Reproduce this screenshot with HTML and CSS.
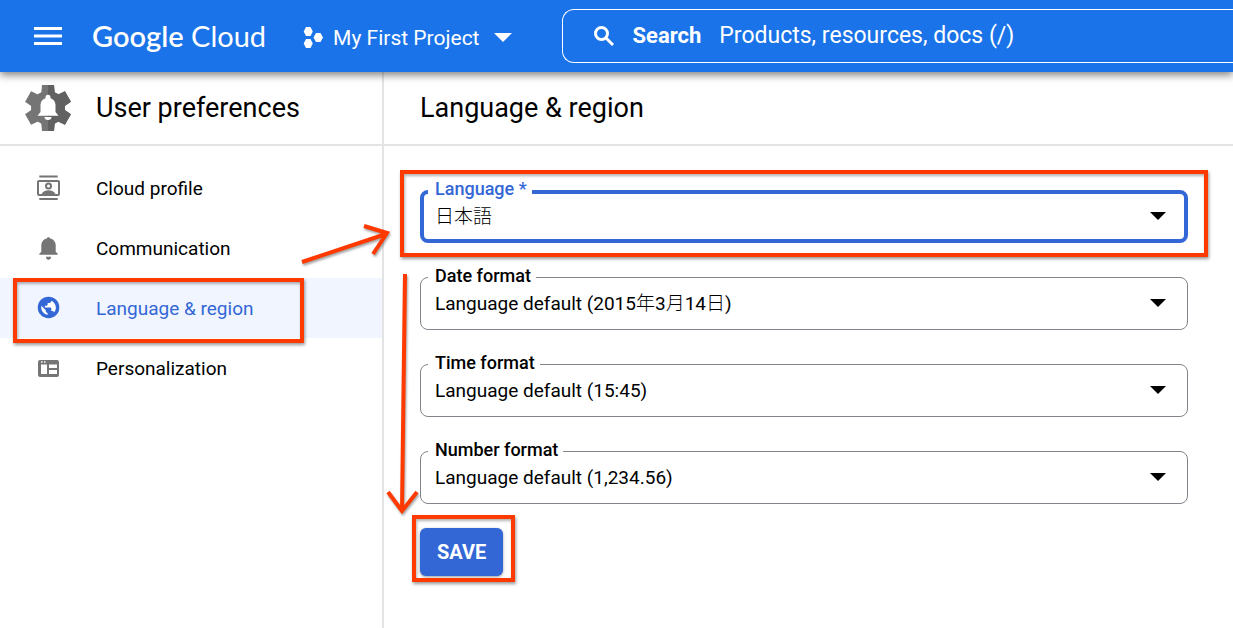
FILE: index.html
```
<!DOCTYPE html>
<html lang="en">
<head>
    <meta charset="UTF-8">
    <meta name="viewport" content="width=device-width, initial-scale=1.0">
    <title>Language &amp; region - User preferences</title>
    <link rel="stylesheet" href="styles.css">
</head>
<body>
    <header class="topbar">
        <button class="menu-btn" aria-label="Main menu">
            <svg width="28" height="20" viewBox="0 0 28 20" fill="#fff"><path d="M0 1h28v3H0zM0 8.500h28v3H0zM0 16h28v3H0z"/></svg>
        </button>
        <a class="logo" href="#"><b>Google</b> Cloud</a>
        <button class="project-btn">
            <svg width="21" height="22" viewBox="0 0 21 22" fill="#fff">
                <path d="M3 0h4.500l2.300 4.500L7.500 9H3L.7 4.500zM3 12h4.500l2.300 4.500L7.500 21H3L.7 16.500zM13 6h4.500l2.500 4.500-2.500 4.500H13l-2.500-4.500z"/>
            </svg>
            <span>My First Project</span>
            <svg class="project-caret" width="18" height="9" viewBox="0 0 18 9" fill="#fff"><path d="M0 0h18L9 9z"/></svg>
        </button>
        <div class="search">
            <svg width="22" height="22" viewBox="0 0 22 22" fill="none" stroke="#fff" stroke-width="3"><circle cx="8.500" cy="8.500" r="6"/><path d="M13 13l7 7"/></svg>
            <label for="search-input">Search</label>
            <input type="text" id="search-input" placeholder="Products, resources, docs (/)">
        </div>
    </header>
    <div class="page">
        <aside class="sidebar">
            <div class="section-head">
                <svg width="48" height="48" viewBox="-24 -24 48 48">
                    <defs>
                        <path id="tooth" d="M-6-23H6L7-12H-7z"/>
                        <g id="gear">
                            <circle r="17"/>
                            <use href="#tooth"/>
                            <use href="#tooth" transform="rotate(60)"/>
                            <use href="#tooth" transform="rotate(120)"/>
                            <use href="#tooth" transform="rotate(180)"/>
                            <use href="#tooth" transform="rotate(240)"/>
                            <use href="#tooth" transform="rotate(300)"/>
                        </g>
                        <clipPath id="right-half"><path d="M0-24h24v48H0z"/></clipPath>
                    </defs>
                    <use href="#gear" fill="#757575"/>
                    <g clip-path="url(#right-half)"><use href="#gear" fill="#616161"/></g>
                    <path fill="#fff" d="M-10.500 7.700L-7.500 4V-3a7.500 7.500 0 0 1 5-6.800v-1a2.500 2.500 0 0 1 5 0v1a7.500 7.500 0 0 1 5 6.800v7l3 3.700zM-3.500 9h7a3.500 3 0 0 1-7 0z"/>
                </svg>
                <h2>User preferences</h2>
            </div>
            <nav class="nav">
                <a href="#">
                    <svg width="28" height="28" viewBox="0 0 28 28" fill="#757575">
                        <path d="M5.300 1.500h18.400v2H5.300zM5.300 24h18.400v2H5.300z"/>
                        <rect x="4" y="7" width="21" height="14" rx="1" fill="none" stroke="#757575" stroke-width="2"/>
                        <circle cx="14.500" cy="12" r="2.500" fill="none" stroke="#757575" stroke-width="2"/>
                        <path d="M7.500 20.500c1-3 4-4.300 7-4.300s6 1.300 7 4.300z"/>
                    </svg>
                    Cloud profile
                </a>
                <a href="#">
                    <svg width="28" height="28" viewBox="0 0 28 28" fill="#757575">
                        <path d="M5.300 20.700v-1l2-2v-7a7.200 7.200 0 0 1 5.400-6.200 1.900 1.900 0 0 1 3.600 0 7.200 7.200 0 0 1 5.400 6.200v7l2 2v1zM12 22.700h5a2.500 3 0 0 1-5 0z"/>
                    </svg>
                    Communication
                </a>
                <a href="#" class="active">
                    <svg width="28" height="28" viewBox="-1 -1 26 26" fill="#3367d6">
                        <circle cx="12.500" cy="11.500" r="10"/>
                        <path fill="#fff" transform="translate(2.300 1.300) scale(.85)" d="M4.210 10.210L9 15v1c0 1.100.9 2 2 2v1.930c-3.950-.49-7-3.850-7-7.930 0-.62.08-1.210.21-1.790zM15 4.590c2.930 1.190 5 4.060 5 7.410 0 2.080-.8 3.970-2.100 5.390-.26-.81-1-1.390-1.900-1.390h-1v-3c0-.55-.45-1-1-1H8v-2h2c.55 0 1-.45 1-1V7h2c1.100 0 2-.9 2-2z"/>
                    </svg>
                    Language &amp; region
                    <span class="highlight highlight-nav"></span>
                </a>
                <a href="#">
                    <svg width="28" height="28" viewBox="0 0 28 28">
                        <rect x="4" y="6" width="21" height="17" rx="2" fill="#757575"/>
                        <path fill="#fff" d="M7 10.500h6V20H7zM15 10.500h8v3.500h-8zM15 16h8v4h-8zM7 7.200h1.500v1.500H7zM10 7.200h1.500v1.500H10z"/>
                    </svg>
                    Personalization
                </a>
            </nav>
        </aside>
        <main class="content">
            <div class="section-head">
                <h1>Language &amp; region</h1>
            </div>
            <form class="form">
                <div class="field focused">
                    <label for="language">Language *</label>
                    <select id="language"><option>日本語</option></select>
                    <svg class="caret" width="16" height="8" viewBox="0 0 16 8"><path d="M0 0h16L8 8z"/></svg>
                    <span class="highlight highlight-field"></span>
                </div>
                <div class="field">
                    <label for="date">Date format</label>
                    <select id="date"><option>Language default (2015年3月14日)</option></select>
                    <svg class="caret" width="16" height="8" viewBox="0 0 16 8"><path d="M0 0h16L8 8z"/></svg>
                </div>
                <div class="field">
                    <label for="time">Time format</label>
                    <select id="time"><option>Language default (15:45)</option></select>
                    <svg class="caret" width="16" height="8" viewBox="0 0 16 8"><path d="M0 0h16L8 8z"/></svg>
                </div>
                <div class="field">
                    <label for="number">Number format</label>
                    <select id="number"><option>Language default (1,234.56)</option></select>
                    <svg class="caret" width="16" height="8" viewBox="0 0 16 8"><path d="M0 0h16L8 8z"/></svg>
                </div>
                <button class="save-btn" type="button">
                    SAVE
                    <span class="highlight highlight-save"></span>
                </button>
            </form>
            <!-- arrows between the highlighted steps -->
            <svg class="arrows" width="40" height="450" viewBox="0 0 40 450" fill="none" stroke="#ff3a00" stroke-width="4">
                <path d="M-82 190L2 162M-20 154L3 161-11 182"/>
                <path d="M21 202L18 438M4 420l14 19 15-19"/>
            </svg>
        </main>
    </div>
</body>
</html>
```
FILE: styles.css
```
* {
    box-sizing: border-box;
    margin: 0;
    padding: 0;
    font-family: Roboto, "Noto Sans CJK JP Light", "Noto Sans CJK JP", sans-serif;
}

body {
    min-height: 100vh;
    display: flex;
    flex-direction: column;
    background-color: #fff;
    color: #000;
    font-size: 19px;
    overflow-x: hidden;
}

button {
    border: none;
    background: none;
    color: inherit;
    cursor: pointer;
}

a {
    color: inherit;
    text-decoration: none;
}

/* Top bar */
.topbar {
    display: flex;
    align-items: center;
    height: 72px;
    padding-left: 34px;
    background-color: #1a73e8;
    color: #fff;
    box-shadow: 0 3px 8px rgba(0, 0, 0, 0.5);
    position: relative;
    z-index: 2;
}

.menu-btn {
    display: flex;
}

.logo {
    margin-left: 30px;
    padding-bottom: 2px;
    font-family: Lato, sans-serif;
    font-size: 29px;
}

.logo b {
    font-family: inherit;
    font-weight: 600;
}

.project-btn {
    display: flex;
    align-items: center;
    gap: 9px;
    margin-left: 37px;
    padding-top: 3px;
    font-size: 21px;
}

.project-caret {
    margin-left: 5px;
}

.search {
    flex: 1;
    display: flex;
    align-items: center;
    height: 54px;
    margin-left: 50px;
    padding-left: 30px;
    border: 1px solid #fff;
    border-right: none;
    border-radius: 12px 0 0 12px;
}

.search label {
    margin-left: 18px;
    padding-bottom: 2px;
    font-size: 22px;
    font-weight: bold;
}

.search input {
    flex: 1;
    margin-left: 18px;
    padding-bottom: 2px;
    border: none;
    outline: none;
    background: none;
    font-size: 23px;
    color: #fff;
}

.search input::placeholder {
    color: #fff;
}

.page {
    flex: 1;
    display: flex;
}

.sidebar {
    width: 384px;
    border-right: 2px solid #e4e4e4;
}

.section-head {
    display: flex;
    align-items: center;
    height: 74px;
    border-bottom: 2px solid #e4e4e4;
}

.section-head h1,
.section-head h2 {
    font-size: 27px;
    font-weight: normal;
}

.sidebar .section-head {
    padding-left: 24px;
    gap: 24px;
}

.content .section-head {
    padding-left: 36px;
}

.nav {
    padding-top: 12px;
}

.nav a {
    display: flex;
    align-items: center;
    gap: 34px;
    height: 60px;
    padding-left: 34px;
    position: relative;
}

.nav .active {
    background-color: #f0f5ff;
    color: #3367d6;
}

/* Form */
.content {
    flex: 1;
    position: relative;
    z-index: 1;
}

.form {
    padding: 44px 45px 44px 36px;
}

.field {
    position: relative;
    margin-bottom: 34px;
}

.field select {
    display: block;
    width: 100%;
    height: 53px;
    padding: 0 14px;
    border: 1px solid #80868b;
    border-radius: 8px;
    appearance: none;
    background: none;
    font-size: 19px;
    color: #000;
}

.field label {
    position: absolute;
    top: -12px;
    left: 8px;
    padding: 0 5px 0 7px;
    background-color: #fff;
    font-size: 18px;
    font-weight: 500;
}

.field .caret {
    position: absolute;
    top: 22px;
    right: 22px;
    pointer-events: none;
}

.field.focused select {
    padding: 0 11px;
    border: 4px solid #3367d6;
}

.focused label {
    color: #3367d6;
}

.save-btn {
    display: block;
    position: relative;
    margin-top: -10px;
    padding: 12px 17px;
    border-radius: 6px;
    background-color: #3367d6;
    box-shadow: 0 1px 3px rgba(0, 0, 0, 0.4);
    color: #fff;
    font-size: 20px;
    line-height: 24px;
    font-weight: bold;
}

/* Step markers */
.highlight {
    position: absolute;
    border: 4px solid #ff3a00;
    box-shadow: 1px 2px 3px rgba(0, 0, 0, 0.4), inset 1px 2px 3px rgba(0, 0, 0, 0.3);
    pointer-events: none;
}

.highlight-nav {
    inset: 0 78px -5px 13px;
}

.highlight-field {
    inset: -20px -20px -14px;
}

.highlight-save {
    inset: -13px -12px -6px -8px;
}

.arrows {
    position: absolute;
    top: 0;
    left: 0;
    overflow: visible;
    pointer-events: none;
    filter: drop-shadow(1px 2px 1px rgba(0, 0, 0, 0.35));
}
```
